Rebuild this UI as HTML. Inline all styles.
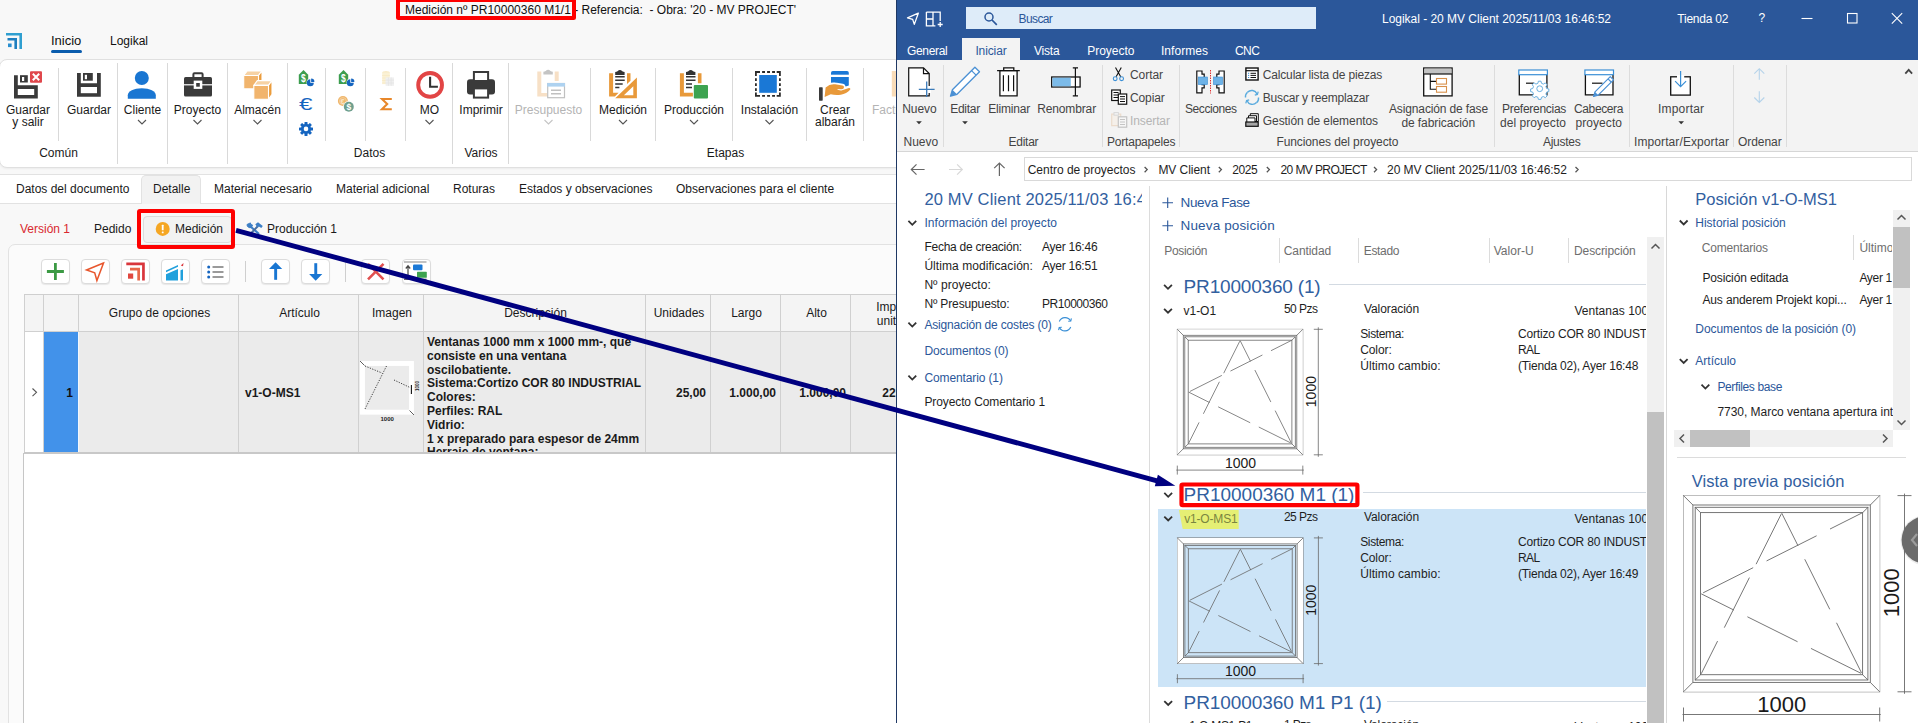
<!DOCTYPE html>
<html lang="es">
<head>
<meta charset="utf-8">
<title>Medición - Logikal</title>
<style>
*{box-sizing:border-box;margin:0;padding:0}
html,body{width:1918px;height:723px;overflow:hidden;background:#f8f8f8}
body{position:relative;font-family:"Liberation Sans",Arial,sans-serif;font-size:12px;color:#1a1a1a}
.a{position:absolute;white-space:nowrap}
.c{position:absolute;white-space:nowrap;text-align:center;transform:translateX(-50%)}
svg{position:absolute;overflow:visible}
/* LEFT */
#L{position:absolute;left:0;top:0;width:896px;height:723px;overflow:hidden;background:#f8f8f8}
.vs{position:absolute;width:1px;background:#d9d9d9}
.rl{position:absolute;white-space:nowrap;text-align:center;transform:translateX(-50%);line-height:12px;font-size:12px;color:#1a1a1a}
.dis{color:#b4b4b4}
.tb{position:absolute;top:259px;width:29px;height:25px;background:#fff;border:1px solid #dcdcdc;border-radius:4px;box-shadow:0 1px 1px rgba(0,0,0,.08)}
.gh{position:absolute;top:294px;height:38px;border-right:1px solid #d0d0d0;border-bottom:1px solid #d0d0d0;border-top:1px solid #cfcfcf;background:#f4f4f4;text-align:center;line-height:37px;font-size:12px;padding-left:2px}
.gc{position:absolute;top:332px;height:120px;border-right:1px solid #d0d0d0;background:#ebebeb;font-weight:bold;font-size:12px}
/* RIGHT */
#R{position:absolute;left:897px;top:0;width:1021px;height:723px;overflow:hidden;background:#fff;font-size:12px;color:#1e1e1e}
.bl{color:#2b579a}
.gr{color:#6a6a6a}
.rs{position:absolute;width:1px;background:#dadada;top:66px;height:76px}
.rc{position:absolute;white-space:nowrap;text-align:center;transform:translateX(-50%);color:#444;font-size:12px;line-height:14px}
</style>
</head>
<body>
<div id="L">
<!-- title -->
<div class="a" style="left:405px;top:3px;font-size:12px;line-height:14px;color:#111">Medición nº PR10000360 M1/1 - Referencia:&nbsp; - Obra: '20 - MV PROJECT'</div>
<div class="a" style="left:395.600px;top:-2px;width:180.400px;height:22px;border:4.100px solid #fe0000;border-radius:2.500px"></div>
<!-- logo -->
<svg style="left:6px;top:33px" width="16" height="16" viewBox="0 0 16 16"><path d="M0 0h16v16h-2.6V2.6H0z" fill="#2f9fd0"/><path d="M1.5 5h9.5v11H8.4V7.6H1.5z" fill="#1f7fbf"/><rect x="2" y="10.5" width="3.6" height="3.6" fill="#2a8fd0"/></svg>
<div class="a" style="left:51px;top:33px;font-size:13px;line-height:15px;color:#111">Inicio</div>
<div class="a" style="left:51px;top:50px;width:31px;height:3px;background:#0a5cad;border-radius:2px"></div>
<div class="a" style="left:110px;top:34px;font-size:12px;line-height:15px;color:#111">Logikal</div>
<!-- ribbon panel -->
<div class="a" style="left:-1px;top:59px;width:920px;height:109px;background:#fff;border:1px solid #e0e0e0;border-radius:8px;box-shadow:0 1px 2px rgba(0,0,0,.05)"></div>
<!-- separators -->
<div class="vs" style="left:58px;top:68px;height:73px"></div>
<div class="vs" style="left:117px;top:63px;height:101px"></div>
<div class="vs" style="left:167px;top:63px;height:101px"></div>
<div class="vs" style="left:227px;top:63px;height:101px"></div>
<div class="vs" style="left:287px;top:63px;height:101px"></div>
<div class="vs" style="left:325px;top:68px;height:73px"></div>
<div class="vs" style="left:365px;top:68px;height:73px"></div>
<div class="vs" style="left:405px;top:68px;height:73px"></div>
<div class="vs" style="left:452px;top:63px;height:101px"></div>
<div class="vs" style="left:508px;top:63px;height:101px"></div>
<div class="vs" style="left:590px;top:68px;height:73px"></div>
<div class="vs" style="left:655px;top:68px;height:73px"></div>
<div class="vs" style="left:732px;top:68px;height:73px"></div>
<div class="vs" style="left:806px;top:68px;height:73px"></div>
<div class="vs" style="left:863px;top:68px;height:73px"></div>
<!-- labels -->
<div class="rl" style="left:28px;top:104px">Guardar<br>y salir</div>
<div class="rl" style="left:89px;top:104px">Guardar</div>
<div class="rl" style="left:142.500px;top:104px">Cliente</div>
<div class="rl" style="left:197.5px;top:104px">Proyecto</div>
<div class="rl" style="left:257.5px;top:104px">Almacén</div>
<div class="rl" style="left:429.5px;top:104px">MO</div>
<div class="rl" style="left:481px;top:104px">Imprimir</div>
<div class="rl dis" style="left:548.5px;top:104px">Presupuesto</div>
<div class="rl" style="left:623px;top:104px">Medición</div>
<div class="rl" style="left:694px;top:104px">Producción</div>
<div class="rl" style="left:769.5px;top:104px">Instalación</div>
<div class="rl" style="left:835px;top:104px">Crear<br>albarán</div>
<div class="a dis" style="left:872px;top:104px;line-height:12px">Factura</div>
<div class="rl" style="left:58.5px;top:147px">Común</div>
<div class="rl" style="left:369.5px;top:147px">Datos</div>
<div class="rl" style="left:481px;top:147px">Varios</div>
<div class="rl" style="left:725.5px;top:147px">Etapas</div>
<!-- chevrons -->
<svg style="left:0;top:0" width="896" height="140" fill="none" stroke="#555" stroke-width="1.1">
<path d="M138 120l4 4l4-4M193.5 120l4 4l4-4M253.5 120l4 4l4-4M425.5 120l4 4l4-4M619 120l4 4l4-4M690 120l4 4l4-4M765.5 120l4 4l4-4"/>
<path d="M544.5 120l4 4l4-4" stroke="#c4c4c4"/>
</svg>
<svg style="left:0;top:0" width="896" height="170" viewBox="0 0 896 170">
<!-- Guardar y salir -->
<g fill="#3a3a3a">
<path d="M14 75.2h3.8v10h20v13.4H14z"/>
<rect x="20" y="75.2" width="7.8" height="7.3"/>
</g>
<rect x="17.8" y="89" width="16.4" height="6" fill="#fff"/>
<rect x="22" y="77" width="2.2" height="4" fill="#fff"/>
<rect x="30" y="71.2" width="12" height="11.6" rx="1" fill="#e0474c"/>
<path d="M32.8 73.8l6.4 6.4M39.2 73.8l-6.4 6.4" stroke="#fff" stroke-width="2" fill="none"/>
<!-- Guardar -->
<g fill="#3a3a3a">
<path d="M77 73h3.8v10.3h16.2V73h3.8v23.8H77z"/>
<rect x="83" y="73" width="9.8" height="7.7"/>
</g>
<rect x="80.8" y="87" width="16.2" height="6.2" fill="#fff"/>
<rect x="84.8" y="74.8" width="2.2" height="4.4" fill="#fff"/>
<!-- Cliente -->
<circle cx="141.8" cy="78" r="7" fill="#1976d2"/>
<path d="M127.8 98.8v-3.6c0-4 6-7 14-7s14 3 14 7v3.600z" fill="#1976d2"/>
<!-- Proyecto -->
<path d="M193.4 77v-2.700a1 1 0 0 1 1-1h7.200a1 1 0 0 1 1 1V77" fill="none" stroke="#3a3a3a" stroke-width="2"/>
<rect x="184" y="77" width="28" height="19.6" rx="1.600" fill="#3a3a3a"/>
<rect x="184" y="84.200" width="28" height="1.200" fill="#fff"/>
<rect x="193.700" y="80.600" width="8.600" height="8.300" fill="#fff"/>
<rect x="196.200" y="83" width="3.600" height="3.700" fill="#3a3a3a"/>
<!-- Almacén -->
<g stroke="#fff" stroke-width="1.100" stroke-linejoin="round">
<path d="M243.700 75.500l3.500-4.600h14.800l-3.500 4.600z" fill="#f6d2a4"/>
<path d="M258.500 75.500l3.500-4.600v13.400l-3.500 4.600z" fill="#eb9c3c"/>
<rect x="243.700" y="75.500" width="14.800" height="13.400" fill="#f1b46c"/>
<path d="M253.800 85.400l3.500-4.800h14.700l-3.500 4.800z" fill="#f6d2a4"/>
<path d="M268.500 85.400l3.500-4.800v13.800l-3.500 4.800z" fill="#eb9c3c"/>
<rect x="253.800" y="85.400" width="14.700" height="13.800" fill="#f1b46c"/>
</g>
<!-- tag $ 1 -->
<g id="tag1">
<path d="M298.800 74.800l4.700-4.800l4.700 4.800v9.200h-9.400z" fill="#3c9d4e"/>
<text transform="translate(303.300 82.300) scale(.74 1)" font-size="11.500" font-weight="bold" fill="#fff" text-anchor="middle" font-family="Liberation Sans,sans-serif">$</text>
<circle cx="310.500" cy="82.500" r="3.900" fill="#fff"/>
<path d="M310.300 82.700v-3.500a3.500 3.500 0 1 0 3.500 3.500z" fill="#1565c0"/>
<path d="M311.100 81.900v-3.300a3.300 3.300 0 0 1 3.300 3.300z" fill="#1565c0"/>
</g>
<!-- euro -->
<text x="299" y="110.300" font-size="17" fill="#1565c0" font-family="Liberation Sans,sans-serif" textLength="13.500" lengthAdjust="spacingAndGlyphs">€</text>
<!-- gear -->
<g transform="translate(306 128.900)" fill="#1565c0">
<g id="teeth"><rect x="-1.500" y="-7" width="3" height="14" rx=".5"/><rect x="-1.500" y="-7" width="3" height="14" rx=".5" transform="rotate(45)"/><rect x="-1.500" y="-7" width="3" height="14" rx=".5" transform="rotate(90)"/><rect x="-1.500" y="-7" width="3" height="14" rx=".5" transform="rotate(135)"/></g>
<circle r="5"/><circle r="2.300" fill="#fff"/>
</g>
<!-- tag $ 2 -->
<g transform="translate(40 0)">
<path d="M298.800 74.800l4.700-4.800l4.700 4.800v9.200h-9.400z" fill="#3c9d4e"/>
<text transform="translate(303.300 82.300) scale(.74 1)" font-size="11.500" font-weight="bold" fill="#fff" text-anchor="middle" font-family="Liberation Sans,sans-serif">$</text>
<circle cx="310.500" cy="82.500" r="3.900" fill="#fff"/>
<path d="M310.300 82.700v-3.500a3.500 3.500 0 1 0 3.500 3.500z" fill="#1565c0"/>
<path d="M311.100 81.900v-3.300a3.300 3.300 0 0 1 3.300 3.300z" fill="#1565c0"/>
</g>
<!-- coins -->
<circle cx="342.900" cy="101" r="5" fill="#efb66c"/><circle cx="342.900" cy="101" r="3.400" fill="none" stroke="#f7d6a6" stroke-width=".8"/>
<text x="342.700" y="104" font-size="7.500" font-weight="bold" fill="#fae4c4" text-anchor="middle" font-family="Liberation Sans,sans-serif">€</text>
<circle cx="348.800" cy="106.700" r="5.600" fill="#fff"/>
<circle cx="348.800" cy="106.700" r="5" fill="#6f9f8e"/>
<text x="348.800" y="109.900" font-size="8.500" font-weight="bold" fill="#fff" text-anchor="middle" font-family="Liberation Sans,sans-serif">$</text>
<!-- calc faded -->
<g opacity=".55">
<ellipse cx="386" cy="72.600" rx="3.800" ry="1.700" fill="#f3dc9c"/>
<rect x="382.200" y="72.600" width="7.600" height="11.500" fill="#f7e6b4"/>
<path d="M382.200 75.500h7.600M382.200 78h7.600M382.200 80.500h7.600M382.200 83h7.600" stroke="#f3dc9c" stroke-width="1"/>
<rect x="385.600" y="77.400" width="8.400" height="8.400" fill="#e4e4e4"/>
<path d="M385.600 80.200h8.400M385.600 83h8.400M388.400 77.400v8.400M391.200 77.400v8.400" stroke="#cfcfcf" stroke-width=".8"/>
</g>
<!-- sigma -->
<path d="M391.800 99h-9.800l5.200 5.100l-5.200 5.100h9.800" fill="none" stroke="#e8872a" stroke-width="2.100" stroke-linejoin="miter"/>
<!-- clock -->
<circle cx="430.100" cy="84.900" r="11.900" fill="#fff" stroke="#e24545" stroke-width="3.900"/>
<path d="M430.100 76.700v10.100h7.800" fill="none" stroke="#333" stroke-width="2.100"/>
<!-- printer -->
<rect x="467" y="79.300" width="28" height="15.200" rx="3" fill="#3a3a3a"/>
<rect x="473.900" y="72" width="14.200" height="9" fill="#fff" stroke="#3a3a3a" stroke-width="2"/>
<rect x="473.900" y="88.400" width="14.200" height="9.200" fill="#fff" stroke="#3a3a3a" stroke-width="2"/>
<!-- presupuesto (disabled) -->
<path d="M537.300 71.500h4v21.500h6v3.500h-10zM554.700 71.500h4v9.500h-4z" fill="#f7e0c6"/>
<path d="M543.400 74.600v-2.800q1.300-.4 2.300-.9q2.400-2.400 4.800 0q1 .5 2.300.9v2.800z" fill="#c4c4c4"/>
<rect x="547.700" y="83.500" width="16.800" height="14.200" fill="#fff" stroke="#c0c0c0" stroke-width="1.200"/>
<rect x="547.200" y="83" width="17.800" height="3.600" fill="#aed2f0"/>
<path d="M551 90.300h10M551 93.700h10" stroke="#c0c0c0" stroke-width="1.400"/>
<!-- medicion -->
<path d="M609.100 73.200h4v19.600h5.500l-3.700 3.700h-5.800zM627 73.200h3.500v7.500l-3.500 3.300z" fill="#e8993a"/>
<path d="M615.200 75v-2.900q1.300-.4 2.300-.9q2.400-2.400 4.800 0q1 .5 2.300.9v2.900z" fill="#333"/>
<path d="M615.200 76.700h9.500M615.200 80.300h9.500M615.200 84h7.500M615.200 87.600h4.200" stroke="#333" stroke-width="1.500"/>
<path d="M636.900 77.600v20.600h-21.700zM633.300 86.300l-9.400 8.900h9.400z" fill="#e8993a" fill-rule="evenodd"/>
<!-- produccion -->
<path d="M679.900 73.200h4v19.600h9v3.700h-13zM697.900 73.200h3.600v10h-3.600z" fill="#e8993a"/>
<path d="M686 75v-2.900q1.300-.4 2.300-.9q2.400-2.400 4.800 0q1 .5 2.300.9v2.900z" fill="#333"/>
<path d="M686 76.700h9.500M686 80.300h9.500M686 84h6M686 87.600h6" stroke="#333" stroke-width="1.500"/>
<rect x="693.200" y="84.400" width="15.400" height="14.800" fill="#fff"/>
<rect x="693.800" y="85" width="14.200" height="13.600" rx="1" fill="#3da350"/>
<!-- instalacion -->
<rect x="759.200" y="75" width="17.600" height="17.800" fill="#1a78d6"/>
<path d="M755.9 76.100v-4.100h4.100M762.100 72h2.900M767.100 72h2.900M772.100 72h2.900M776.700 72h3.200v4.100M779.900 78.200v2.900M779.900 83.200v2.900M779.900 88.200v2.900M779.900 92.600v3.200h-3.200M775 95.800h-2.900M770 95.800h-2.900M765 95.800h-2.900M760 95.800h-4.100v-3.200M755.900 91.100v-2.900M755.900 86.100v-2.900M755.900 81.100v-2.900" fill="none" stroke="#2b2b2b" stroke-width="1.800"/>
<!-- crear albaran -->
<rect x="831" y="71" width="17.800" height="17.200" rx="1.800" fill="#1a78d6"/>
<rect x="830" y="74.700" width="20" height="2.300" fill="#fff"/>
<path d="M824 97.500l1.200-10.500q5-4.500 10-3.400l7.500 1.200q2.400.6 1.600 3.200l5.500-1.800q2.200 0 1.800 2q-4 4.500-10 5.400q-6 .6-10-.4l-5.500 4.200z" fill="#fff" stroke="#fff" stroke-width="2"/>
<path d="M824.600 97l1-9.500q4.500-4 9.500-3.200l7.400 1.200q2 .5 1.400 2.400q-.8 1.600-3 1.400l-4-.2q1.500 1.600 4.500 1.400l7.500-2.400q1.800 0 1.400 1.400q-3.800 4.400-9.500 5.200q-6 .6-10-.5z" fill="#e8993a"/>
<rect x="819" y="87.300" width="3.700" height="13.400" rx=".6" fill="#3a3a3a"/>
<!-- factura (disabled, clipped) -->
<rect x="891.800" y="71" width="5" height="25.500" fill="#f9dcb8"/>
</svg>

<!-- main tab strip -->
<div class="a" style="left:0;top:174px;width:896px;height:30px;background:#fff;border-top:1px solid #e2e2e2;border-bottom:1px solid #e2e2e2"></div>
<div class="a" style="left:141px;top:175px;width:60px;height:29px;background:#f2f2f2;border:1px solid #e2e2e2;border-bottom:none;border-radius:5px 5px 0 0"></div>
<div class="a" style="left:16px;top:182px;line-height:15px">Datos del documento</div>
<div class="a" style="left:153px;top:182px;line-height:15px">Detalle</div>
<div class="a" style="left:214px;top:182px;line-height:15px">Material necesario</div>
<div class="a" style="left:336px;top:182px;line-height:15px">Material adicional</div>
<div class="a" style="left:453px;top:182px;line-height:15px">Roturas</div>
<div class="a" style="left:519px;top:182px;line-height:15px">Estados y observaciones</div>
<div class="a" style="left:676px;top:182px;line-height:15px">Observaciones para el cliente</div>
<!-- sub tabs -->
<div class="a" style="left:20px;top:222px;line-height:15px;color:#d9282f">Versión 1</div>
<div class="a" style="left:94px;top:222px;line-height:15px">Pedido</div>
<div class="a" style="left:143px;top:216px;width:89px;height:27px;background:#f2f2f2;border:1px solid #dcdcdc;border-radius:4px"></div>
<svg style="left:155px;top:221px" width="16" height="16" viewBox="0 0 16 16"><circle cx="7.700" cy="7.900" r="7" fill="#f5a623"/><rect x="6.800" y="3.800" width="1.800" height="5.400" rx=".5" fill="#fff"/><rect x="6.800" y="10.400" width="1.800" height="1.800" rx=".5" fill="#fff"/></svg>
<div class="a" style="left:175px;top:222px;line-height:15px">Medición</div>
<svg style="left:246px;top:221px" width="18" height="14" viewBox="246 221 18 14"><path d="M250.500 226.500l8.500 7.500" stroke="#3d7fc6" stroke-width="2.200" fill="none"/><path d="M247 224.500a3 3 0 0 0 4.500 2.800l1-2.300l-1.600-.4l-.5-1.700z" fill="#3d7fc6" stroke="#3d7fc6" stroke-width="1"/><path d="M250.500 233.800l7.500-7.800" stroke="#4a6fa0" stroke-width="2" fill="none"/><path d="M255.300 224.300l2.700-2l4.800 3.800l-1.500 1.800l-2.500-1.500l-1.300 1.200z" fill="#3d7fc6"/></svg>
<div class="a" style="left:267px;top:222px;line-height:15px">Producción 1</div>
<!-- panel -->
<div class="a" style="left:8px;top:244px;width:900px;height:490px;background:#fbfbfb;border:1px solid #e2e2e2;border-radius:7px 0 0 0"></div>
<div class="a" style="left:137.400px;top:209.300px;width:98px;height:40.200px;border:4.200px solid #fe0000;border-radius:3px"></div>
<!-- toolbar -->
<div class="tb" style="left:41px"></div><div class="tb" style="left:81px"></div><div class="tb" style="left:121px"></div><div class="tb" style="left:161px"></div><div class="tb" style="left:201px"></div>
<div class="a" style="left:245px;top:261px;width:1px;height:21px;background:#cfcfcf"></div>
<div class="tb" style="left:261px"></div><div class="tb" style="left:301px"></div>
<div class="a" style="left:345px;top:261px;width:1px;height:21px;background:#cfcfcf"></div>
<div class="tb" style="left:361px"></div><div class="tb" style="left:402px"></div>
<svg style="left:0;top:245px" width="480" height="50" viewBox="0 245 480 50">
<path d="M55.400 263v17M46.900 271.500h17" stroke="#3c9a44" stroke-width="2.800"/>
<path d="M103.500 263l-17 7l8.200 2.800l2.200 7.700z" fill="none" stroke="#e8572e" stroke-width="1.500" stroke-linejoin="miter"/>
<path d="M126.300 262.500h18.500v18h-2.700v-15.300h-15.800z" fill="#d9363c"/><path d="M130 267.700h10v12.800h-2.700v-10.100h-7.300z" fill="#e8674a"/><rect x="128" y="273.500" width="5.200" height="5.200" fill="#e0473f"/>
<path d="M166 270.500l12-5.500v1.800l-12 5.500zM166 274.300l12-5.200v11.400h-12zM180.500 270.200l2.500-1v11.300h-2.500z" fill="#21a0dc"/><path d="M180.800 265.500l2.700-2.500l-.5 3.200z" fill="#d9363c"/>
<circle cx="208.700" cy="267" r="1.500" fill="#1565c0"/><circle cx="208.700" cy="272" r="1.500" fill="#1565c0"/><circle cx="208.700" cy="277" r="1.500" fill="#1565c0"/>
<path d="M212.500 267h11M212.500 272h11M212.500 277h11" stroke="#7a7a7a" stroke-width="1.500"/>
<path d="M275.600 280v-11h-6.600l6.600-6.800l6.600 6.800h-5.300" fill="#1976d2"/><rect x="274.200" y="268" width="2.900" height="11.800" fill="#1976d2"/>
<path d="M315.700 263v11h-6.600l6.600 6.800l6.600-6.800h-5.300" fill="#1976d2"/><rect x="314.300" y="263.200" width="2.900" height="11.800" fill="#1976d2"/>
<path d="M368 263.800l15.500 15.500M383.500 263.800l-15.500 15.500" stroke="#e05050" stroke-width="2.600"/>
<path d="M404 262h22.500" stroke="#9a9a9a" stroke-width="1.200"/><path d="M404 279.300h22.500" stroke="#555" stroke-width="1.200"/>
<path d="M408 278.500v-12.500M405.800 268.500l2.200-2.700l2.200 2.700" fill="none" stroke="#444" stroke-width="1.200"/>
<rect x="413" y="264.500" width="9.500" height="5.800" rx="1" fill="#1a78d6"/><rect x="417" y="271.800" width="9.800" height="6" rx=".6" fill="#3da350"/>
</svg>
<!-- grid -->
<div class="a" style="left:24px;top:294px;width:880px;height:1px;background:#cfcfcf"></div>
<div class="a" style="left:23.300px;top:453px;width:880px;height:280px;background:#fff;border-left:1px solid #c6c6c6"></div>
<div class="gh" style="left:24px;width:20px;border-left:1px solid #d0d0d0"></div>
<div class="gh" style="left:44px;width:35px"></div>
<div class="gh" style="left:79px;width:160px">Grupo de opciones</div>
<div class="gh" style="left:239px;width:120px">Artículo</div>
<div class="gh" style="left:359px;width:65px">Imagen</div>
<div class="gh" style="left:424px;width:222px">Descripción</div>
<div class="gh" style="left:646px;width:65px">Unidades</div>
<div class="gh" style="left:711px;width:70px">Largo</div>
<div class="gh" style="left:781px;width:70px">Alto</div>
<div class="gh" style="left:851px;width:90px;line-height:14px;padding-top:5px">Importe<br>unitario</div>
<div class="gc" style="left:24px;width:20px;background:#fff;border-left:1px solid #d0d0d0;top:332px;height:120px"></div>
<div class="gc" style="left:44px;width:35px;background:#4292ea;top:332px;height:120px;border-right:1px solid #f2f7fd;text-align:right;padding-right:5px;line-height:122px;color:#111">1</div>
<div class="gc" style="left:79px;width:160px"></div>
<div class="gc" style="left:239px;width:120px;line-height:122px;padding-left:6px">v1-O-MS1</div>
<div class="gc" style="left:359px;width:65px"></div>
<div class="gc" style="left:424px;width:222px;overflow:hidden;line-height:13.800px;padding:4px 0 0 3px;white-space:nowrap">Ventanas 1000 mm x 1000 mm-, que<br>consiste en una ventana<br>oscilobatiente.<br>Sistema:Cortizo COR 80 INDUSTRIAL<br>Colores:<br>Perfiles: RAL<br>Vidrio:<br>1 x preparado para espesor de 24mm<br>Herraje de ventana:</div>
<div class="gc" style="left:646px;width:65px;line-height:122px;text-align:right;padding-right:4px">25,00</div>
<div class="gc" style="left:711px;width:70px;line-height:122px;text-align:right;padding-right:4px">1.000,00</div>
<div class="gc" style="left:781px;width:70px;line-height:122px;text-align:right;padding-right:4px">1.000,00</div>
<div class="gc" style="left:851px;width:90px;line-height:122px;text-align:right;padding-right:21px">225,00</div>
<div class="a" style="left:24px;top:452.300px;width:880px;height:1.500px;background:#c8c8c8"></div>
<svg style="left:30px;top:386px" width="10" height="12" viewBox="0 0 10 12"><path d="M2.500 2.500l4 3.800l-4 3.800" fill="none" stroke="#555" stroke-width="1.100"/></svg>
<!-- thumbnail -->
<svg style="left:359px;top:355px" width="64" height="70" viewBox="359 355 64 70">
<rect x="362.500" y="363.500" width="49" height="48.700" fill="none" stroke="#fff" stroke-width="4.900"/>
<path d="M360 361l4.500 4.500M409.500 410.500l4.500 4.500" stroke="#333" stroke-width=".8"/>
<path d="M365 366l17 7M386.500 366l-21.500 43M394 380l16 7.500" stroke="#2a2a2a" stroke-width=".9" stroke-dasharray="1.200 1.400"/>
<path d="M411.400 385v9" stroke="#111" stroke-width="1.100"/>
<text x="387.200" y="420.500" font-size="6" font-weight="bold" text-anchor="middle" fill="#222" font-family="Liberation Sans,sans-serif">1000</text>
<text transform="translate(419 386) rotate(-90)" font-size="4.500" font-weight="bold" text-anchor="middle" fill="#222" font-family="Liberation Sans,sans-serif">1000</text>
</svg>

</div>
<div class="a" style="left:896px;top:0;width:1px;height:723px;background:#1f3864"></div>
<div id="R">
<!--RG0-->
<div class="a" style="left:0.0px;top:0.0px;width:1021.0px;height:60.0px;background:#2b579a"></div>
<div class="a" style="left:69.0px;top:7.0px;width:350.0px;height:22.0px;background:#deecf9"></div>
<div class="a" style="left:121.5px;top:10.5px;line-height:16px;color:#2b579a;letter-spacing:-0.600px;">Buscar</div>
<div class="a" style="left:485.0px;top:10.5px;line-height:16px;color:#fff;letter-spacing:-0.022px;">Logikal - 20 MV Client 2025/11/03 16:46:52</div>
<div class="a" style="left:780.3px;top:10.5px;line-height:16px;color:#fff;letter-spacing:-0.236px;">Tienda 02</div>
<div class="a" style="left:861.5px;top:10.0px;line-height:16px;color:#fff;">?</div>
<div class="a" style="left:10.0px;top:42.5px;line-height:16px;color:#fff;letter-spacing:-0.341px;">General</div>
<div class="a" style="left:65.0px;top:38.0px;width:58.0px;height:22.0px;background:#f3f3f3"></div>
<div class="a" style="left:78.4px;top:42.5px;line-height:16px;color:#2b579a;letter-spacing:-0.115px;">Iniciar</div>
<div class="a" style="left:136.9px;top:42.5px;line-height:16px;color:#fff;letter-spacing:-0.172px;">Vista</div>
<div class="a" style="left:190.2px;top:42.5px;line-height:16px;color:#fff;letter-spacing:-0.007px;">Proyecto</div>
<div class="a" style="left:264.0px;top:42.5px;line-height:16px;color:#fff;letter-spacing:0.040px;">Informes</div>
<div class="a" style="left:338.0px;top:42.5px;line-height:16px;color:#fff;letter-spacing:-0.600px;">CNC</div>
<div class="a" style="left:0.0px;top:60.0px;width:1021.0px;height:92.0px;background:#f3f3f3;border-bottom:1px solid #d6d6d6"></div>
<div class="a" style="left:46.0px;top:65.0px;width:1.0px;height:82.0px;background:#dcdcdc"></div>
<div class="a" style="left:205.0px;top:65.0px;width:1.0px;height:82.0px;background:#dcdcdc"></div>
<div class="a" style="left:282.0px;top:65.0px;width:1.0px;height:82.0px;background:#dcdcdc"></div>
<div class="a" style="left:597.0px;top:65.0px;width:1.0px;height:82.0px;background:#dcdcdc"></div>
<div class="a" style="left:732.0px;top:65.0px;width:1.0px;height:82.0px;background:#dcdcdc"></div>
<div class="a" style="left:836.0px;top:65.0px;width:1.0px;height:82.0px;background:#dcdcdc"></div>
<div class="a" style="left:889.0px;top:65.0px;width:1.0px;height:82.0px;background:#dcdcdc"></div>
<div class="a" style="left:5.2px;top:100.5px;line-height:16px;color:#444;letter-spacing:-0.057px;">Nuevo</div>
<div class="a" style="left:6.6px;top:133.5px;line-height:16px;color:#444;letter-spacing:-0.057px;">Nuevo</div>
<div class="a" style="left:53.2px;top:100.5px;line-height:16px;color:#444;letter-spacing:-0.258px;">Editar</div>
<div class="a" style="left:91.2px;top:100.5px;line-height:16px;color:#444;letter-spacing:-0.168px;">Eliminar</div>
<div class="a" style="left:140.2px;top:100.5px;line-height:16px;color:#444;letter-spacing:-0.135px;">Renombrar</div>
<div class="a" style="left:111.5px;top:133.5px;line-height:16px;color:#444;letter-spacing:-0.258px;">Editar</div>
<div class="a" style="left:233.0px;top:67.0px;line-height:16px;color:#444;letter-spacing:-0.056px;">Cortar</div>
<div class="a" style="left:233.0px;top:90.0px;line-height:16px;color:#444;letter-spacing:-0.108px;">Copiar</div>
<div class="a" style="left:233.0px;top:113.0px;line-height:16px;color:#b5b5b5;letter-spacing:-0.110px;">Insertar</div>
<div class="a" style="left:210.0px;top:133.5px;line-height:16px;color:#444;letter-spacing:-0.209px;">Portapapeles</div>
<div class="a" style="left:288.0px;top:100.5px;line-height:16px;color:#444;letter-spacing:-0.429px;">Secciones</div>
<div class="a" style="left:365.8px;top:67.0px;line-height:16px;color:#444;letter-spacing:-0.170px;">Calcular lista de piezas</div>
<div class="a" style="left:365.8px;top:90.0px;line-height:16px;color:#444;letter-spacing:-0.196px;">Buscar y reemplazar</div>
<div class="a" style="left:365.8px;top:113.0px;line-height:16px;color:#444;letter-spacing:-0.076px;">Gestión de elementos</div>
<div class="a" style="left:492.0px;top:100.5px;line-height:16px;color:#444;letter-spacing:-0.133px;">Asignación de fase</div>
<div class="a" style="left:504.4px;top:114.5px;line-height:16px;color:#444;letter-spacing:-0.079px;">de fabricación</div>
<div class="a" style="left:379.4px;top:133.5px;line-height:16px;color:#444;letter-spacing:-0.094px;">Funciones del proyecto</div>
<div class="a" style="left:605.0px;top:100.5px;line-height:16px;color:#444;letter-spacing:-0.280px;">Preferencias</div>
<div class="a" style="left:603.0px;top:114.5px;line-height:16px;color:#444;letter-spacing:0.053px;">del proyecto</div>
<div class="a" style="left:677.0px;top:100.5px;line-height:16px;color:#444;letter-spacing:-0.378px;">Cabecera</div>
<div class="a" style="left:678.5px;top:114.5px;line-height:16px;color:#444;letter-spacing:0.060px;">proyecto</div>
<div class="a" style="left:646.0px;top:133.5px;line-height:16px;color:#444;letter-spacing:-0.279px;">Ajustes</div>
<div class="a" style="left:761.0px;top:100.5px;line-height:16px;color:#444;letter-spacing:0.203px;">Importar</div>
<div class="a" style="left:737.0px;top:133.5px;line-height:16px;color:#444;letter-spacing:0.097px;">Importar/Exportar</div>
<div class="a" style="left:841.0px;top:133.5px;line-height:16px;color:#444;letter-spacing:-0.060px;">Ordenar</div>
<div class="a" style="left:0.0px;top:152.0px;width:1021.0px;height:32.0px;background:#fff"></div>
<div class="a" style="left:127.0px;top:157.0px;width:888.0px;height:23.5px;background:#fff;border:1px solid #d9d9d9"></div>
<div class="a" style="left:130.7px;top:161.5px;line-height:16px;color:#1e1e1e;letter-spacing:-0.018px;">Centro de proyectos</div>
<div class="a" style="left:261.4px;top:161.5px;line-height:16px;color:#1e1e1e;letter-spacing:-0.046px;">MV Client</div>
<div class="a" style="left:335.2px;top:161.5px;line-height:16px;color:#1e1e1e;letter-spacing:-0.373px;">2025</div>
<div class="a" style="left:383.5px;top:161.5px;line-height:16px;color:#1e1e1e;letter-spacing:-0.600px;">20 MV PROJECT</div>
<div class="a" style="left:490.0px;top:161.5px;line-height:16px;color:#1e1e1e;letter-spacing:-0.045px;">20 MV Client 2025/11/03 16:46:52</div>
<div class="a" style="left:27.4px;top:187.7px;line-height:22px;font-size:16.5px;color:#32609f;width:217.6px;overflow:hidden;letter-spacing:0.16px;">20 MV Client 2025/11/03 16:46:52</div>
<div class="a" style="left:27.4px;top:214.8px;line-height:16px;color:#2b579a;letter-spacing:0.050px;">Información del proyecto</div>
<div class="a" style="left:27.4px;top:238.7px;line-height:16px;color:#1e1e1e;letter-spacing:-0.253px;">Fecha de creación:</div>
<div class="a" style="left:145.0px;top:238.7px;line-height:16px;color:#1e1e1e;letter-spacing:-0.252px;">Ayer 16:46</div>
<div class="a" style="left:27.4px;top:257.7px;line-height:16px;color:#1e1e1e;letter-spacing:0.062px;">Última modificación:</div>
<div class="a" style="left:145.0px;top:257.7px;line-height:16px;color:#1e1e1e;letter-spacing:-0.252px;">Ayer 16:51</div>
<div class="a" style="left:27.4px;top:277.0px;line-height:16px;color:#1e1e1e;letter-spacing:0.063px;">Nº proyecto:</div>
<div class="a" style="left:27.4px;top:296.0px;line-height:16px;color:#1e1e1e;letter-spacing:-0.133px;">Nº Presupuesto:</div>
<div class="a" style="left:145.0px;top:296.0px;line-height:16px;color:#1e1e1e;letter-spacing:-0.466px;">PR10000360</div>
<div class="a" style="left:27.4px;top:316.6px;line-height:16px;color:#2b579a;letter-spacing:-0.171px;">Asignación de costes (0)</div>
<div class="a" style="left:27.4px;top:342.7px;line-height:16px;color:#2b579a;letter-spacing:-0.097px;">Documentos (0)</div>
<div class="a" style="left:27.4px;top:370.0px;line-height:16px;color:#2b579a;letter-spacing:-0.116px;">Comentario (1)</div>
<div class="a" style="left:27.4px;top:394.4px;line-height:16px;color:#1e1e1e;letter-spacing:-0.101px;">Proyecto Comentario 1</div>
<div class="a" style="left:252.0px;top:186.0px;width:1.0px;height:540.0px;background:#dcdcdc"></div>
<div class="a" style="left:283.6px;top:194.2px;line-height:18px;font-size:13.5px;color:#2b579a;letter-spacing:-0.368px;">Nueva Fase</div>
<div class="a" style="left:283.6px;top:217.2px;line-height:18px;font-size:13.5px;color:#2b579a;letter-spacing:0.136px;">Nueva posición</div>
<div class="a" style="left:267.2px;top:242.8px;line-height:16px;color:#6e6e6e;letter-spacing:-0.295px;">Posición</div>
<div class="a" style="left:386.7px;top:242.8px;line-height:16px;color:#6e6e6e;letter-spacing:-0.066px;">Cantidad</div>
<div class="a" style="left:466.7px;top:242.8px;line-height:16px;color:#6e6e6e;letter-spacing:-0.310px;">Estado</div>
<div class="a" style="left:596.7px;top:242.8px;line-height:16px;color:#6e6e6e;letter-spacing:0.017px;">Valor-U</div>
<div class="a" style="left:677.0px;top:242.8px;line-height:16px;color:#6e6e6e;letter-spacing:-0.099px;">Descripción</div>
<div class="a" style="left:382.0px;top:238.0px;width:1.0px;height:25.0px;background:#dcdcdc"></div>
<div class="a" style="left:461.0px;top:238.0px;width:1.0px;height:25.0px;background:#dcdcdc"></div>
<div class="a" style="left:592.0px;top:238.0px;width:1.0px;height:25.0px;background:#dcdcdc"></div>
<div class="a" style="left:671.0px;top:238.0px;width:1.0px;height:25.0px;background:#dcdcdc"></div>
<div class="a" style="left:261.0px;top:508.5px;width:488.0px;height:178.5px;background:#cce4f7"></div>
<div class="a" style="left:286.6px;top:274.1px;line-height:26px;font-size:19px;color:#32609f;letter-spacing:-0.180px;">PR10000360 (1)</div>
<div class="a" style="left:431.6px;top:284.3px;width:317.4px;height:1.0px;background:#d3dae2"></div>
<div class="a" style="left:286.6px;top:482.1px;line-height:26px;font-size:19px;color:#32609f;letter-spacing:-0.017px;">PR10000360 M1 (1)</div>
<div class="a" style="left:466.4px;top:492.3px;width:282.6px;height:1.0px;background:#d3dae2"></div>
<div class="a" style="left:286.6px;top:690.3px;line-height:26px;font-size:19px;color:#32609f;letter-spacing:-0.070px;">PR10000360 M1 P1 (1)</div>
<div class="a" style="left:490.0px;top:700.5px;width:259.0px;height:1.0px;background:#d3dae2"></div>
<div class="a" style="left:286.6px;top:302.5px;line-height:16px;color:#1e1e1e;letter-spacing:-0.055px;">v1-O1</div>
<div class="a" style="left:386.9px;top:300.9px;line-height:16px;color:#1e1e1e;letter-spacing:-0.531px;">50 Pzs</div>
<div class="a" style="left:466.9px;top:300.9px;line-height:16px;color:#1e1e1e;letter-spacing:-0.071px;">Valoración</div>
<div class="a" style="left:677.4px;top:302.7px;line-height:16px;color:#1e1e1e;width:71.6px;overflow:hidden;letter-spacing:0.041px;">Ventanas 1000</div>
<div class="a" style="left:463.2px;top:325.9px;line-height:16px;color:#1e1e1e;letter-spacing:-0.360px;">Sistema:</div>
<div class="a" style="left:463.2px;top:341.9px;line-height:16px;color:#1e1e1e;letter-spacing:-0.085px;">Color:</div>
<div class="a" style="left:463.2px;top:357.7px;line-height:16px;color:#1e1e1e;letter-spacing:0.075px;">Último cambio:</div>
<div class="a" style="left:621.0px;top:325.9px;line-height:16px;color:#1e1e1e;width:128.0px;overflow:hidden;letter-spacing:-0.175px;">Cortizo COR 80 INDUSTRIAL</div>
<div class="a" style="left:621.0px;top:341.9px;line-height:16px;color:#1e1e1e;letter-spacing:-0.600px;">RAL</div>
<div class="a" style="left:621.0px;top:357.7px;line-height:16px;color:#1e1e1e;letter-spacing:-0.197px;">(Tienda 02), Ayer 16:48</div>
<div class="a" style="left:281.9px;top:509.8px;width:59.8px;height:19.6px;background:#e5ef74;clip-path:polygon(0 0,100% 0,100% 100%,6.5% 100%)"></div>
<div class="a" style="left:287.2px;top:510.7px;line-height:16px;color:#7a8540;letter-spacing:-0.171px;">v1-O-MS1</div>
<div class="a" style="left:386.9px;top:509.1px;line-height:16px;color:#1e1e1e;letter-spacing:-0.497px;">25 Pzs</div>
<div class="a" style="left:466.9px;top:509.1px;line-height:16px;color:#1e1e1e;letter-spacing:-0.071px;">Valoración</div>
<div class="a" style="left:677.4px;top:510.9px;line-height:16px;color:#1e1e1e;width:71.6px;overflow:hidden;letter-spacing:0.041px;">Ventanas 1000</div>
<div class="a" style="left:463.2px;top:534.1px;line-height:16px;color:#1e1e1e;letter-spacing:-0.360px;">Sistema:</div>
<div class="a" style="left:463.2px;top:550.1px;line-height:16px;color:#1e1e1e;letter-spacing:-0.085px;">Color:</div>
<div class="a" style="left:463.2px;top:565.9px;line-height:16px;color:#1e1e1e;letter-spacing:0.075px;">Último cambio:</div>
<div class="a" style="left:621.0px;top:534.1px;line-height:16px;color:#1e1e1e;width:128.0px;overflow:hidden;letter-spacing:-0.175px;">Cortizo COR 80 INDUSTRIAL</div>
<div class="a" style="left:621.0px;top:550.1px;line-height:16px;color:#1e1e1e;letter-spacing:-0.600px;">RAL</div>
<div class="a" style="left:621.0px;top:565.9px;line-height:16px;color:#1e1e1e;letter-spacing:-0.197px;">(Tienda 02), Ayer 16:49</div>
<div class="a" style="left:286.6px;top:718.3px;line-height:16px;color:#1e1e1e;letter-spacing:-0.449px;">v1-O-MS1-P1</div>
<div class="a" style="left:386.9px;top:716.7px;line-height:16px;color:#1e1e1e;letter-spacing:-0.582px;">1 Pzs</div>
<div class="a" style="left:466.9px;top:716.7px;line-height:16px;color:#1e1e1e;letter-spacing:-0.071px;">Valoración</div>
<div class="a" style="left:677.4px;top:718.5px;line-height:16px;color:#1e1e1e;width:71.6px;overflow:hidden;letter-spacing:0.041px;">Ventanas 1000</div>
<div class="a" style="left:750.0px;top:237.0px;width:17.0px;height:490.0px;background:#f0f0f0"></div>
<div class="a" style="left:750.0px;top:412.0px;width:17.0px;height:315.0px;background:#c1c1c1"></div>
<div class="a" style="left:769.0px;top:186.0px;width:1.0px;height:540.0px;background:#d8d8d8"></div>
<div class="a" style="left:798.3px;top:187.7px;line-height:22px;font-size:16.5px;color:#32609f;letter-spacing:-0.031px;">Posición v1-O-MS1</div>
<div class="a" style="left:798.3px;top:214.6px;line-height:16px;color:#2b579a;letter-spacing:-0.017px;">Historial posición</div>
<div class="a" style="left:804.7px;top:239.8px;line-height:16px;color:#6e6e6e;letter-spacing:-0.175px;">Comentarios</div>
<div class="a" style="left:956.0px;top:235.0px;width:1.0px;height:25.0px;background:#dcdcdc"></div>
<div class="a" style="left:962.4px;top:239.8px;line-height:16px;color:#6e6e6e;width:32.9px;overflow:hidden;letter-spacing:0.016px;">Último</div>
<div class="a" style="left:805.4px;top:269.7px;line-height:16px;color:#1e1e1e;letter-spacing:-0.128px;">Posición editada</div>
<div class="a" style="left:962.4px;top:269.7px;line-height:16px;color:#1e1e1e;width:32.9px;overflow:hidden;letter-spacing:-0.322px;">Ayer 16:49</div>
<div class="a" style="left:805.4px;top:292.0px;line-height:16px;color:#1e1e1e;letter-spacing:-0.115px;">Aus anderem Projekt kopi...</div>
<div class="a" style="left:962.4px;top:292.0px;line-height:16px;color:#1e1e1e;width:32.9px;overflow:hidden;letter-spacing:-0.322px;">Ayer 16:49</div>
<div class="a" style="left:798.3px;top:320.7px;line-height:16px;color:#2b579a;letter-spacing:-0.047px;">Documentos de la posición (0)</div>
<div class="a" style="left:798.3px;top:353.0px;line-height:16px;color:#2b579a;letter-spacing:0.003px;">Artículo</div>
<div class="a" style="left:820.4px;top:378.6px;line-height:16px;color:#2b579a;letter-spacing:-0.367px;">Perfiles base</div>
<div class="a" style="left:820.4px;top:403.5px;line-height:16px;color:#1e1e1e;width:175.6px;overflow:hidden;letter-spacing:-0.032px;">7730, Marco ventana apertura interior</div>
<div class="a" style="left:996.0px;top:210.0px;width:17.0px;height:220.0px;background:#f0f0f0"></div>
<div class="a" style="left:996.0px;top:227.0px;width:17.0px;height:61.0px;background:#c1c1c1"></div>
<div class="a" style="left:777.0px;top:430.0px;width:219.0px;height:17.0px;background:#f0f0f0"></div>
<div class="a" style="left:793.0px;top:430.0px;width:60.0px;height:17.0px;background:#c1c1c1"></div>
<div class="a" style="left:780.0px;top:457.0px;width:229.0px;height:1.0px;background:#dcdcdc"></div>
<div class="a" style="left:794.7px;top:469.6px;line-height:22px;font-size:16.5px;color:#32609f;letter-spacing:0.080px;">Vista previa posición</div>
<!--RG1-->
<svg style="left:0;top:0" width="1021" height="185" viewBox="897 0 1021 185" fill="none">
<!-- title bar icons -->
<path d="M918.300 13.200l-10.800 4.600l5.200 1.600l1.600 5z" stroke="#fff" stroke-width="1.300" stroke-linejoin="round"/>
<path d="M926.400 12.100h13.800v9M926.400 12.100v13.800h9M933 12.100v13.800M926.400 19h6.600" stroke="#fff" stroke-width="1.300"/>
<path d="M940.200 22v5M937.700 24.500h5" stroke="#fff" stroke-width="1.300"/>
<circle cx="989" cy="17" r="4" stroke="#2b579a" stroke-width="1.500"/><path d="M992 20l4.800 4.800" stroke="#2b579a" stroke-width="1.700"/>
<path d="M1801.500 18.500h11" stroke="#fff" stroke-width="1.100"/>
<rect x="1847.500" y="13.500" width="9.500" height="9.500" stroke="#fff" stroke-width="1.100"/>
<path d="M1891.800 13.200l10.400 10.400M1902.200 13.200l-10.400 10.400" stroke="#fff" stroke-width="1.100"/>
<!-- Nuevo -->
<path d="M908.700 67.900h14.800l5.700 5.700v22.300h-20.500z" fill="#fff" stroke="#111" stroke-width="1.200"/>
<path d="M923.500 67.900v5.700h5.700" stroke="#111" stroke-width="1.200"/>
<rect x="924" y="86" width="7" height="7" fill="#fff" stroke="none"/>
<path d="M926.700 81.600v15.400M918.800 89.300h15.800" stroke="#3a7ab8" stroke-width="1.300"/>
<path d="M916.200 121.200h5.600l-2.800 3z" fill="#333"/>
<path d="M962.200 121.200h5.600l-2.800 3z" fill="#333"/>
<path d="M1678.400 121.200h5.600l-2.800 3z" fill="#333"/>
<!-- Editar pencil -->
<path d="M950.500 96.200l1.900-6.500l22.500-22.500l4.600 4.600l-22.500 22.500z" fill="#fff" stroke="#4a90d4" stroke-width="1.300" stroke-linejoin="round"/>
<path d="M950.500 96.200l1.900-6.500l4.600 4.600z" fill="#4a90d4"/>
<path d="M971.500 70.600l4.600 4.600" stroke="#4a90d4" stroke-width="1.200"/>
<!-- Eliminar trash -->
<path d="M999.900 70.600h17.200v25.300h-17.200z" fill="#fff" stroke="#111" stroke-width="1.300"/>
<path d="M997.100 70.600h22.700M1003.700 70.600v-2.700h10.100v2.700" stroke="#111" stroke-width="1.300" fill="#fff"/>
<path d="M1003.400 75.300v15.900M1008.500 75.300v15.900M1013.600 75.300v15.900" stroke="#111" stroke-width="1.200"/>
<!-- Renombrar -->
<rect x="1051.700" y="77" width="28.400" height="10" fill="#fff" stroke="#111" stroke-width="1.300"/>
<rect x="1052.400" y="77.700" width="18.400" height="8.600" fill="#7cbbe9"/>
<path d="M1075.400 67.900v28M1072.800 67.900h5.200M1072.800 95.900h5.200" stroke="#111" stroke-width="1.200"/>
<!-- Cortar -->
<path d="M1115.500 67.400l5.200 9.400M1121.300 67.400l-5.200 9.400" stroke="#111" stroke-width="1.100"/>
<circle cx="1115.200" cy="78.700" r="1.900" stroke="#3a8fd6" stroke-width="1.100"/><circle cx="1121.600" cy="78.700" r="1.900" stroke="#3a8fd6" stroke-width="1.100"/>
<!-- Copiar -->
<rect x="1111.700" y="90" width="8.600" height="10.500" fill="#fff" stroke="#111" stroke-width="1.200"/>
<path d="M1113.500 92.500h5M1113.500 95h5M1113.500 97.500h5" stroke="#111" stroke-width="1"/>
<rect x="1118.300" y="94" width="8.400" height="10.200" fill="#fff" stroke="#111" stroke-width="1.200"/>
<path d="M1120 96.600h5M1120 99h5M1120 101.500h5" stroke="#111" stroke-width="1"/>
<!-- Insertar (disabled) -->
<path d="M1111.700 114.200h9v11.500h-9z" stroke="#ecdccc" stroke-width="1.200" fill="#f5f0ea"/>
<rect x="1114" y="112.600" width="4.400" height="2.600" stroke="#d8d8d8" stroke-width="1" fill="#f3f3f3"/>
<rect x="1118.300" y="116.800" width="8.400" height="10.400" fill="#f6f6f6" stroke="#c4c4c4" stroke-width="1.200"/>
<path d="M1120 119.500h5M1120 122h5M1120 124.500h5" stroke="#c4c4c4" stroke-width="1"/>
<!-- Secciones -->
<path d="M1196.800 71h5.200v3.200h2.200v3.300h-2.200v7.100h2.200v3.300h-2.200v5h-5.200z" fill="#fff" stroke="#111" stroke-width="1.200"/>
<path d="M1224.200 71h-5.200v3.200h-2.200v3.300h2.200v7.100h-2.200v3.300h2.200v5h5.200z" fill="#fff" stroke="#111" stroke-width="1.200"/>
<rect x="1198.400" y="77" width="9.100" height="7.600" fill="#6db2e6" stroke="#3a8fd6" stroke-width=".6"/>
<rect x="1213.400" y="77" width="9.100" height="7.600" fill="#6db2e6" stroke="#3a8fd6" stroke-width=".6"/>
<path d="M1210.500 70v23.500" stroke="#e03030" stroke-width="1" stroke-dasharray="1.500 1"/>
<!-- Calcular -->
<rect x="1245.900" y="68" width="12.200" height="12" fill="#fff" stroke="#111" stroke-width="1.400"/>
<path d="M1245.900 70.700h12.200" stroke="#111" stroke-width="1.200"/>
<path d="M1250.500 73.300h5.500M1250.500 75.400h5.500M1250.500 77.500h5.500" stroke="#111" stroke-width="1"/>
<path d="M1248 73.300h1.200M1248 75.400h1.200M1248 77.500h1.200" stroke="#3a8fd6" stroke-width="1"/>
<!-- Buscar y reemplazar -->
<path d="M1247.500 92.200a5.800 5.800 0 0 1 9.500 1.800M1256.500 102.600a5.800 5.800 0 0 1-9.500-1.800" stroke="#5aabde" stroke-width="1.400"/>
<path d="M1245.500 97.500a6 6 0 0 1 2-5.300M1258.500 97.500a6 6 0 0 1-2 5.300" stroke="#5aabde" stroke-width="1.400"/>
<path d="M1254.800 95.200l2.600-.8l.8-2.800" stroke="#5aabde" stroke-width="1.300"/><path d="M1249.200 99.800l-2.600.8l-.8 2.800" stroke="#5aabde" stroke-width="1.300"/>
<!-- Gestion -->
<path d="M1250.300 121.500v-7.800h8v7.800z" stroke="#111" stroke-width="1" fill="#fff"/><path d="M1248.500 121.500v-5.800h8v5.800z" stroke="#111" stroke-width="1" fill="#fff"/>
<path d="M1246.800 122v-4.100h8.200v4.100" stroke="#111" stroke-width="1" fill="#fff"/>
<rect x="1245.800" y="122" width="12.400" height="4.300" fill="#a6a6a6" stroke="#111" stroke-width="1.200"/>
<!-- Asignacion -->
<rect x="1423.700" y="68" width="28.400" height="27.900" fill="#fff" stroke="#111" stroke-width="1.300"/>
<rect x="1424.300" y="68.600" width="27.200" height="5.400" fill="#c2c2c2"/>
<path d="M1423.700 74h28.400" stroke="#111" stroke-width="1.200"/>
<path d="M1430.300 74v15.300h6M1430.300 81.400h6" stroke="#111" stroke-width="1.100"/>
<rect x="1436.500" y="78.500" width="10" height="5.600" fill="#fff" stroke="#d8904a" stroke-width="1.100"/>
<rect x="1436.500" y="86.500" width="10" height="5.700" fill="#fff" stroke="#d8904a" stroke-width="1.100"/>
<!-- Preferencias -->
<path d="M1519.300 74.500v20.300h27.600v-20.300" fill="#fff" stroke="#111" stroke-width="1.300"/>
<rect x="1518.800" y="70" width="28.600" height="4.700" fill="#fff" stroke="#3a8fd6" stroke-width="1.200"/>
<path d="M1526 83.200h8" stroke="#111" stroke-width="1.200"/>
<g transform="translate(1539.700 88.700)">
<path d="M-1.300-7.500h2.600l.5 2.100l1.900.8l1.900-1.200l1.800 1.800l-1.200 1.900l.8 1.900l2.100.5v2.600l-2.100.5l-.8 1.900l1.200 1.900l-1.800 1.800l-1.900-1.200l-1.900.8l-.5 2.100h-2.600l-.5-2.100l-1.900-.8l-1.900 1.200l-1.800-1.800l1.200-1.900l-.8-1.900l-2.100-.5v-2.600l2.100-.5l.8-1.900l-1.200-1.900l1.800-1.800l1.900 1.200l1.900-.8z" fill="#fff" stroke="#6ab0e0" stroke-width="1"/>
<circle r="2.900" fill="#fff" stroke="#6ab0e0" stroke-width="1"/></g>
<!-- Cabecera -->
<path d="M1585.400 74.500v20.300h27.600v-20.300" fill="#fff" stroke="#111" stroke-width="1.300"/>
<rect x="1584.900" y="70" width="28.600" height="4.700" fill="#fff" stroke="#3a8fd6" stroke-width="1.200"/>
<path d="M1592 83.200h10.500" stroke="#111" stroke-width="1.200"/>
<path d="M1593.600 96.500l1.400-4.600l15.300-15.300l3.200 3.200l-15.300 15.300z" fill="#fff" stroke="#4a90d4" stroke-width="1.200" stroke-linejoin="round"/>
<path d="M1593.600 96.500l1.400-4.600l3.200 3.200z" fill="#4a90d4"/><path d="M1608 78.800l3.200 3.200" stroke="#4a90d4" stroke-width="1.100"/>
<!-- Importar -->
<rect x="1670.700" y="76.800" width="19.600" height="18.300" fill="#fff" stroke="#111" stroke-width="1.300"/>
<rect x="1677" y="75" width="7.200" height="3" fill="#fff"/>
<path d="M1680.600 70.900v15.500M1675.100 81.200l5.500 5.500l5.500-5.500" stroke="#3a8fd6" stroke-width="1.200"/>
<!-- ordenar arrows -->
<path d="M1759.300 68.700v11M1754.300 73.700l5-5l5 5M1759.300 91.300v11M1754.300 97.500l5 5l5-5" stroke="#b5d3ea" stroke-width="1.100"/>
<path d="M1905.300 73.600l3.400-3.800l3.400 3.800" stroke="#444" stroke-width="1.800"/>
<!-- nav arrows -->
<path d="M924.600 169.500h-13M916.500 164.300l-5.200 5.200l5.200 5.200" stroke="#666" stroke-width="1.200"/>
<path d="M949 169.500h13M957.100 164.300l5.200 5.200l-5.200 5.200" stroke="#d8d8d8" stroke-width="1.200"/>
<path d="M999.400 176v-13M994.200 168.200l5.200-5.200l5.200 5.200" stroke="#666" stroke-width="1.200"/>
<!-- breadcrumb chevrons -->
<path d="M1144.600 167l2.600 2.600l-2.600 2.600M1218.800 167l2.600 2.600l-2.600 2.600M1266.800 167l2.600 2.600l-2.600 2.600M1374 167l2.600 2.600l-2.600 2.600M1575.500 167l2.600 2.600l-2.600 2.600" stroke="#555" stroke-width="1.300"/>
</svg>
<!--RS0-->
<svg style="left:0;top:185px" width="1021" height="538" viewBox="897 185 1021 538" fill="none">
<g fill="none" stroke="#686868" stroke-width="0.8">
<rect x="1177.3" y="329.3" width="125.5" height="125.5" fill="#fff" fill-opacity="0"/>
<path d="M1177.3 329.3h125.5v125.5h-125.5zM1183.9 335.9v112.3h112.3v-112.3z" fill="#fff" fill-rule="evenodd" stroke="none"/>
<rect x="1183.3" y="335.3" width="113.5" height="113.5"/>
<rect x="1184.8" y="336.8" width="110.5" height="110.5"/>
<rect x="1188.2" y="340.2" width="103.7" height="103.7"/>
<path d="M1177.3 329.3L1183.3 335.3M1302.8 329.3L1296.8 335.3M1177.3 454.8L1183.3 448.8M1302.8 454.8L1296.8 448.8M1184.8 336.8L1188.2 340.2M1295.3 336.8L1291.9 340.2M1184.8 447.3L1188.2 443.9M1295.3 447.3L1291.9 443.9"/>
<path d="M1188.6 443.3L1240.1 340.5M1240.1 340.5L1291.5 443.3M1291.9 340.2L1188.6 392.1M1188.6 392.1L1291.5 443.3" stroke-dasharray="35.8 9.6" stroke-dashoffset="12.4"/>
<path d="M1318.3 327.3V456.8M1313.8 329.3h9.0M1313.8 454.8h9.0M1176.3 470.1H1303.8M1177.3 465.6v9.0M1302.8 465.6v9.0"/>
</g>
<text x="1240.6" y="467.8" font-size="14" text-anchor="middle" fill="#1a1a1a" font-family="Liberation Sans,sans-serif">1000</text>
<text transform="translate(1316.2 391.6) rotate(-90)" font-size="14" text-anchor="middle" fill="#1a1a1a" font-family="Liberation Sans,sans-serif">1000</text>
<g fill="none" stroke="#686868" stroke-width="0.8">
<rect x="1177.4" y="537.9" width="125.7" height="125.7" fill="#fff" fill-opacity="0"/>
<path d="M1177.4 537.9h125.7v125.7h-125.7zM1184.0 544.5v112.5h112.5v-112.5z" fill="#fff" fill-rule="evenodd" stroke="none"/>
<rect x="1183.4" y="543.9" width="113.7" height="113.7"/>
<rect x="1184.9" y="545.4" width="110.7" height="110.7"/>
<rect x="1188.3" y="548.8" width="103.9" height="103.9"/>
<path d="M1177.4 537.9L1183.4 543.9M1303.1 537.9L1297.1 543.9M1177.4 663.6L1183.4 657.6M1303.1 663.6L1297.1 657.6M1184.9 545.4L1188.3 548.8M1295.6 545.4L1292.2 548.8M1184.9 656.1L1188.3 652.7M1295.6 656.1L1292.2 652.7"/>
<path d="M1188.7 652.1L1240.3 549.1M1240.3 549.1L1291.8 652.1M1292.2 548.8L1188.7 600.8M1188.7 600.8L1291.8 652.1" stroke-dasharray="35.9 9.6" stroke-dashoffset="12.4"/>
<path d="M1318.4 535.9V665.6M1313.9 537.9h9.0M1313.9 663.6h9.0M1176.4 678.7H1304.1M1177.4 674.2v9.0M1303.1 674.2v9.0"/>
</g>
<text x="1240.6" y="676.4" font-size="14" text-anchor="middle" fill="#1a1a1a" font-family="Liberation Sans,sans-serif">1000</text>
<text transform="translate(1316.2 600.2) rotate(-90)" font-size="14" text-anchor="middle" fill="#1a1a1a" font-family="Liberation Sans,sans-serif">1000</text>
<g fill="none" stroke="#686868" stroke-width="0.9">
<rect x="1683.5" y="495.6" width="196.2" height="196.2" fill="#fff" fill-opacity="0"/>
<path d="M1683.5 495.6h196.2v196.2h-196.2zM1693.8 505.9v175.6h175.6v-175.6z" fill="#fff" fill-rule="evenodd" stroke="none"/>
<rect x="1692.9" y="505.0" width="177.4" height="177.4"/>
<rect x="1695.2" y="507.3" width="172.7" height="172.7"/>
<rect x="1700.5" y="512.6" width="162.1" height="162.1"/>
<path d="M1683.5 495.6L1692.9 505.0M1879.7 495.6L1870.3 505.0M1683.5 691.8L1692.9 682.4M1879.7 691.8L1870.3 682.4M1695.2 507.3L1700.5 512.6M1868.0 507.3L1862.7 512.6M1695.2 680.1L1700.5 674.8M1868.0 680.1L1862.7 674.8"/>
<path d="M1701.2 673.8L1781.7 513.1M1781.7 513.1L1862.0 673.8M1862.7 512.6L1701.2 593.8M1701.2 593.8L1862.0 673.8" stroke-dasharray="56.0 15.0" stroke-dashoffset="19.4"/>
<path d="M1904.5 493.6V693.8M1897.5 495.6h14M1897.5 691.8h14M1682.5 714.5H1880.7M1683.5 707.5v14M1879.7 707.5v14"/>
</g>
<text x="1781.8" y="712.3" font-size="22" text-anchor="middle" fill="#1a1a1a" font-family="Liberation Sans,sans-serif">1000</text>
<text transform="translate(1899.0 592.7) rotate(-90)" font-size="22" text-anchor="middle" fill="#1a1a1a" font-family="Liberation Sans,sans-serif">1000</text>
<path d="M908.4 220.9l3.900 3.900l3.900-3.900" stroke="#333" stroke-width="1.800"/>
<path d="M908.4 322.7l3.900 3.900l3.900-3.900" stroke="#333" stroke-width="1.800"/>
<path d="M908.4 375.7l3.900 3.900l3.900-3.900" stroke="#333" stroke-width="1.800"/>
<path d="M1164.1 284.9l3.900 3.900l3.900-3.900" stroke="#333" stroke-width="1.800"/>
<path d="M1164.1 308.8l3.900 3.900l3.900-3.900" stroke="#333" stroke-width="1.800"/>
<path d="M1164.3 492.9l3.900 3.900l3.900-3.900" stroke="#333" stroke-width="1.800"/>
<path d="M1164.3 516.6l3.900 3.900l3.900-3.900" stroke="#333" stroke-width="1.800"/>
<path d="M1164.3 701.1l3.900 3.900l3.900-3.900" stroke="#333" stroke-width="1.800"/>
<path d="M1679.8 220.5l3.900 3.900l3.900-3.900" stroke="#333" stroke-width="1.800"/>
<path d="M1679.8 359.1l3.900 3.900l3.900-3.900" stroke="#333" stroke-width="1.800"/>
<path d="M1701.5 384.7l3.900 3.900l3.900-3.900" stroke="#333" stroke-width="1.800"/>
<path d="M1167.700 197.500v10.600M1162.400 202.800h10.600M1167.700 220.500v10.600M1162.400 225.800h10.600" stroke="#2b579a" stroke-width="1.100"/>
<path d="M1059.300 321.500a6.200 6.200 0 0 1 11.300-.500M1070.700 327a6.200 6.200 0 0 1-11.300.500" stroke="#3a8fd6" stroke-width="1.100"/><path d="M1068.200 321.300l2.600-.200l.6-2.700M1061.800 327.200l-2.600.200l-.6 2.700" stroke="#3a8fd6" stroke-width="1.100"/>
<path d="M1651.500 248.500l4-4l4 4" stroke="#555" stroke-width="1.500"/>
<path d="M1897.500 219.500l4-4l4 4M1897.500 420.500l4 4l4-4" stroke="#555" stroke-width="1.500"/>
<path d="M1684 434.500l-4 4l4 4M1883 434.500l4 4l-4 4" stroke="#555" stroke-width="1.500"/>
<rect x="1181.500" y="484.500" width="175.900" height="20.700" rx="1.200" stroke="#fe0000" stroke-width="4.200"/>
<circle cx="1925.500" cy="540.300" r="25" fill="#000" fill-opacity=".08"/><circle cx="1925.200" cy="540" r="23.600" fill="#6b6b6b"/>
<path d="M1917 534l-5 6l5 6" stroke="#9c9c9c" stroke-width="2.200"/>
</svg>
<!--RS1-->
</div>
<svg style="left:0;top:0;pointer-events:none" width="1918" height="723" viewBox="0 0 1918 723">
<path d="M236 230.300L1158 481.200" stroke="#000080" stroke-width="4.900" fill="none"/>
<path d="M1175.300 485.700l-17.400-11l-3.100 11.600z" fill="#000080"/>
</svg>
</body>
</html>
